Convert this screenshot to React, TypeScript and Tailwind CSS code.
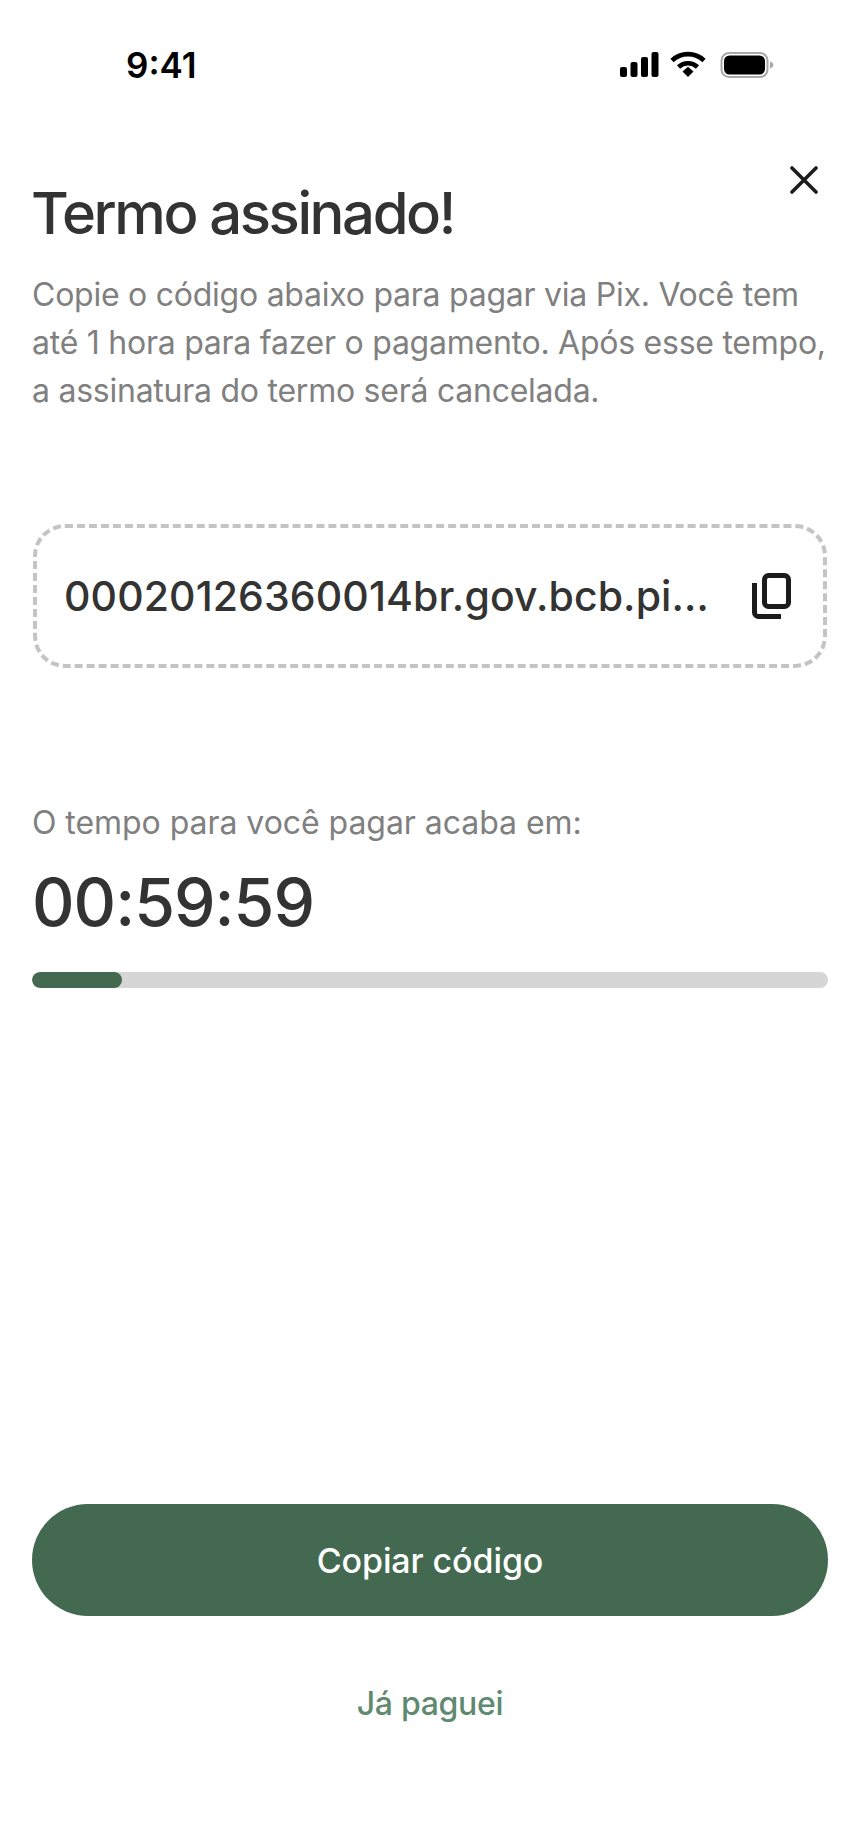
export default function App() {
  return (
    <div className="flex h-[1824px] w-[860px] flex-col bg-white font-['Inter','Noto_Sans',sans-serif] text-[#333333]">
      <div className="flex h-[130px] shrink-0 items-start justify-between pl-[126px] pr-[84px] pt-[44px]">
        <span className="text-[35px] font-semibold leading-[42px] text-black font-['Inter',sans-serif]">9:41</span>
        <svg width="156" height="28" viewBox="0 0 156 28" className="mt-[7px]">
          <rect x="0" y="16" width="7" height="10" rx="2" />
          <rect x="10.5" y="11" width="7" height="15" rx="2" />
          <rect x="21" y="6" width="7" height="20" rx="2" />
          <rect x="31.5" y="1" width="7" height="25" rx="2" />
          <path d="M52 9.5C61 1 75 1 84 9.5" fill="none" stroke="#000" strokeWidth="4.6" />
          <path d="M58.5 16C64 11 72 11 77.5 16" fill="none" stroke="#000" strokeWidth="4.6" />
          <path d="M62.5 20.5L68 15.8L73.5 20.5L68 26Z" />
          <rect x="101.5" y="2" width="46" height="24" rx="7.5" fill="none" stroke="#a8a8a8" strokeWidth="2" />
          <rect x="104" y="4.5" width="41" height="19" rx="5.5" />
          <path d="M150 10.5C152.4 11.2 153.4 12.6 153.4 14C153.4 15.4 152.4 16.8 150 17.5Z" fill="#a8a8a8" />
        </svg>
      </div>

      <div className="relative shrink-0 px-8">
        <svg width="28" height="28" viewBox="0 0 28 28" className="absolute right-[42px] top-[36px]" fill="none" stroke="#1c1c1c" strokeWidth="3.6" strokeLinecap="round">
          <path d="M2 2L26 26M26 2L2 26" />
        </svg>
        <h1 className="m-0 -ml-[1px] pt-[50px] text-[58px] font-medium leading-[66px] tracking-[-2.4px]">Termo assinado!</h1>
        <p className="m-0 mt-[25px] text-[32px] leading-[48px] tracking-[-0.25px] text-[#808080]">
          Copie o código abaixo para pagar via Pix. Você tem
          <br />
          até 1 hora para fazer o pagamento. Após esse tempo,
          <br />
          a assinatura do termo será cancelada.
        </p>
      </div>

      <div className="mx-[33px] mt-[109px] flex h-[144px] shrink-0 items-center justify-between rounded-[32px] border-[4px] border-dashed border-[#c4c4c4] pl-[27px] pr-[32px]">
        <span className="whitespace-nowrap text-[41px] font-medium leading-[50px] tracking-[0.1px]">00020126360014br.gov.bcb.pi…</span>
        <svg width="39" height="46" viewBox="0 0 39 46" fill="none" stroke="#1c1c1c" strokeWidth="5" className="shrink-0">
          <rect x="12.5" y="2.5" width="24" height="31" rx="4" />
          <path d="M2.5 10V39.5C2.5 41.7 4.3 43.5 6.5 43.5H29" />
        </svg>
      </div>

      <div className="mx-8 mt-[135px] shrink-0">
        <p className="m-0 text-[32px] leading-[40px] tracking-[-0.05px] text-[#808080]">O tempo para você pagar acaba em:</p>
        <p className="m-0 mt-[18px] text-[66px] font-medium leading-[82px] tracking-[-1px]">00:59:59</p>
        <div className="mt-[29px] h-4 w-[796px] overflow-hidden rounded-lg bg-[#d6d6d6]">
          <div className="h-full w-[90px] rounded-lg bg-[#436a51]" />
        </div>
      </div>

      <div className="mt-auto flex shrink-0 flex-col items-center px-8 pb-[92px]">
        <button className="flex h-[112px] w-[796px] items-center justify-center rounded-[56px] bg-[#436a51] text-[34px] font-medium tracking-[-0.1px] text-white">Copiar código</button>
        <button className="mt-[60px] flex h-[56px] items-center text-[32px] font-medium tracking-[-0.3px] text-[#5f8a70]">Já paguei</button>
      </div>
    </div>
  );
}
